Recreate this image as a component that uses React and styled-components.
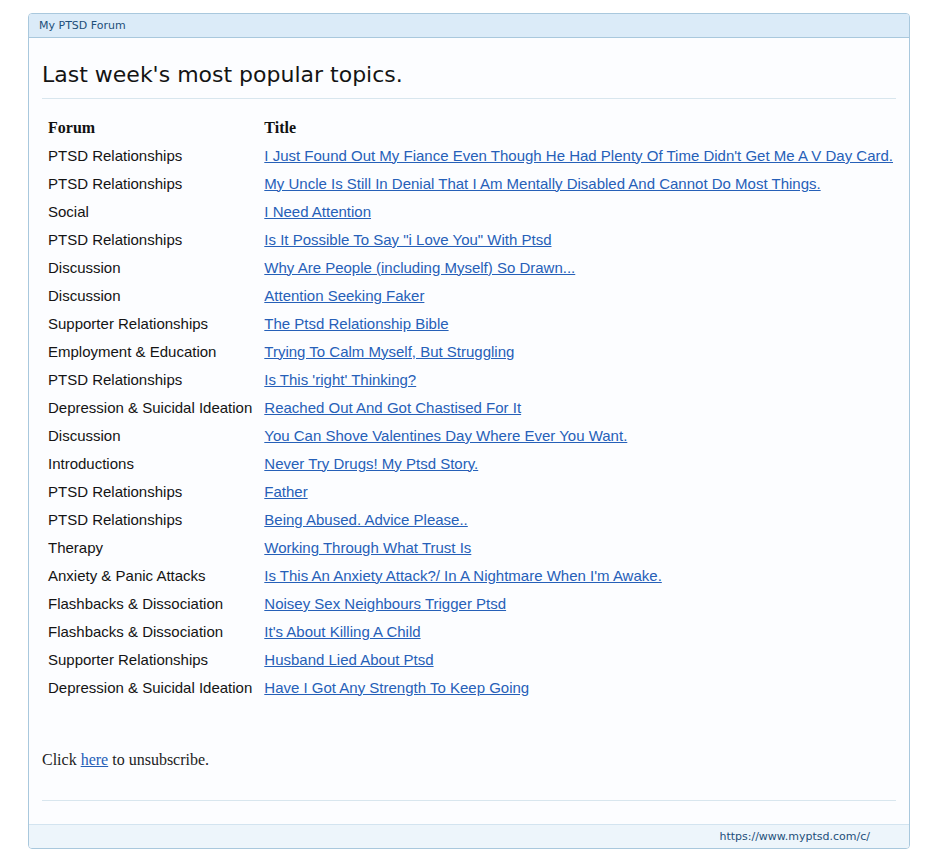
import React from "react";
import styled, { createGlobalStyle } from "styled-components";

const Global = createGlobalStyle`
  body { margin: 0; background: #fff; }
`;
const Page = styled.div`padding: 13px 23px 0 28px;`;
const Box = styled.div`
  width: 880px; border: 1px solid #a9c8dd; border-radius: 4px; background: #fcfdff; overflow: hidden;
`;
const Header = styled.div`
  height: 23px; background: #dbebf8; border-bottom: 1px solid #a9c8dd;
  font: 11px "DejaVu Sans", sans-serif; color: #1d4f7a; padding-left: 10px; line-height: 23px;
`;
const Body = styled.div`padding: 24px 13px 0 13px;`;
const H = styled.h2`
  margin: 0; font: 22px "DejaVu Sans", sans-serif; color: #141414; padding-bottom: 11px;
  border-bottom: 1px solid #d8e6ee;
`;
const Table = styled.table`border-collapse: collapse; margin-top: 14px;`;
const Th = styled.th`
  text-align: left; font: bold 16px "Liberation Serif", serif; color: #111; padding: 2px 6px 0; height: 26px;
`;
const Td = styled.td`
  font: 15px "Liberation Sans", sans-serif; color: #141414; padding: 0 6px; height: 28px; white-space: nowrap;
`;
const A = styled.a`color: #2660b8; text-decoration: underline;`;
const Click = styled.p`
  margin: 50px 0 0; font: 16px "Liberation Serif", serif; color: #222; padding-bottom: 31px;
  border-bottom: 1px solid #d8e6ee;
`;
const Footer = styled.div`
  margin-top: 23px; height: 23px; background: #edf5fb; border-top: 1px solid #d3e4f0;
  font: 11px "DejaVu Sans", sans-serif; color: #1d4f7a; text-align: right; padding-right: 39px; line-height: 24px;
`;

const rows = [
  ["PTSD Relationships", "I Just Found Out My Fiance Even Though He Had Plenty Of Time Didn't Get Me A V Day Card."],
  ["PTSD Relationships", "My Uncle Is Still In Denial That I Am Mentally Disabled And Cannot Do Most Things."],
  ["Social", "I Need Attention"],
  ["PTSD Relationships", 'Is It Possible To Say "i Love You" With Ptsd'],
  ["Discussion", "Why Are People (including Myself) So Drawn..."],
  ["Discussion", "Attention Seeking Faker"],
  ["Supporter Relationships", "The Ptsd Relationship Bible"],
  ["Employment & Education", "Trying To Calm Myself, But Struggling"],
  ["PTSD Relationships", "Is This 'right' Thinking?"],
  ["Depression & Suicidal Ideation", "Reached Out And Got Chastised For It"],
  ["Discussion", "You Can Shove Valentines Day Where Ever You Want."],
  ["Introductions", "Never Try Drugs! My Ptsd Story."],
  ["PTSD Relationships", "Father"],
  ["PTSD Relationships", "Being Abused. Advice Please.."],
  ["Therapy", "Working Through What Trust Is"],
  ["Anxiety & Panic Attacks", "Is This An Anxiety Attack?/ In A Nightmare When I'm Awake."],
  ["Flashbacks & Dissociation", "Noisey Sex Neighbours Trigger Ptsd"],
  ["Flashbacks & Dissociation", "It's About Killing A Child"],
  ["Supporter Relationships", "Husband Lied About Ptsd"],
  ["Depression & Suicidal Ideation", "Have I Got Any Strength To Keep Going"],
];

export default function App() {
  return (
    <Page>
      <Global />
      <Box>
        <Header>My PTSD Forum</Header>
        <Body>
          <H>Last week's most popular topics.</H>
          <Table>
            <thead><tr><Th>Forum</Th><Th>Title</Th></tr></thead>
            <tbody>
              {rows.map((r, i) => (
                <tr key={i}><Td>{r[0]}</Td><Td><A href="#">{r[1]}</A></Td></tr>
              ))}
            </tbody>
          </Table>
          <Click>Click <A href="#">here</A> to unsubscribe.</Click>
        </Body>
        <Footer>https://www.myptsd.com/c/</Footer>
      </Box>
    </Page>
  );
}
